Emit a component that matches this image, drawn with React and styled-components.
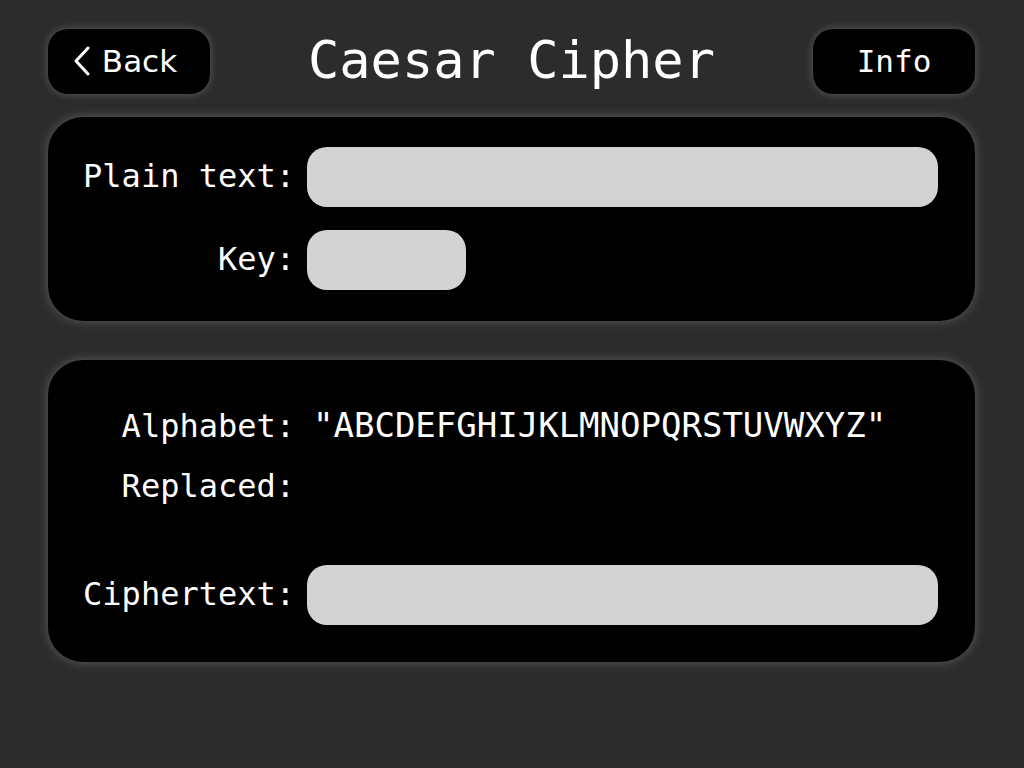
import React from 'react';
import styled, { createGlobalStyle } from 'styled-components';

const GlobalStyle = createGlobalStyle`
  html, body {
    margin: 0;
    padding: 0;
    background: #2c2c2c;
  }
  body {
    font-family: "DejaVu Sans Mono", monospace;
    color: #fff;
  }
`;

const Page = styled.div`
  width: 1024px;
  height: 768px;
  box-sizing: border-box;
  padding: 29px 49px 0 48px;
  display: flex;
  flex-direction: column;
`;

const Header = styled.div`
  display: flex;
  align-items: center;
  justify-content: space-between;
  height: 65px;
`;

const NavButton = styled.button`
  width: 162px;
  height: 65px;
  border: none;
  border-radius: 20px;
  background: #000;
  color: #fff;
  box-shadow: 0 0 9px rgba(170, 170, 170, 0.4);
  display: flex;
  align-items: center;
  justify-content: center;
  gap: 11px;
  font-family: ${p => (p.$sans ? '"DejaVu Sans", sans-serif' : '"DejaVu Sans Mono", monospace')};
  font-size: ${p => (p.$sans ? '31px' : '31px')};
  padding: 0 ${p => (p.$sans ? '8px' : '0')} 2px 0;
  cursor: pointer;
`;

const Title = styled.h1`
  margin: 0;
  font-family: "DejaVu Sans Mono", monospace;
  font-weight: normal;
  font-size: 52px;
  color: #fff;
  padding-bottom: 4px;
`;

const Panel = styled.div`
  background: #000;
  border-radius: 35px;
  box-shadow: 0 0 11px rgba(170, 170, 170, 0.4);
  padding: ${p => p.$pad};
  margin-top: ${p => p.$top};
  display: grid;
  grid-template-columns: 247px 1fr;
  column-gap: 12px;
  align-items: center;
`;

const Label = styled.div`
  text-align: right;
  font-size: 32px;
  height: 60px;
  line-height: 58px;
  margin-top: ${p => p.$mt || '0'};
`;

const Value = styled.div`
  font-size: 34px;
  height: 60px;
  line-height: 56px;
  margin-top: ${p => p.$mt || '0'};
  white-space: nowrap;
  margin-left: 6px;
`;

const Field = styled.div`
  height: 60px;
  width: ${p => p.$w || 'auto'};
  background: #d3d3d3;
  border-radius: 20px;
  margin-top: ${p => p.$mt || '0'};
`;

const Chevron = () => (
  <svg width="18" height="30" viewBox="0 0 18 30" fill="none">
    <path d="M15 2 L3 15 L15 28" stroke="#fff" strokeWidth="3" strokeLinecap="round" strokeLinejoin="round" />
  </svg>
);

export default function App() {
  return (
    <Page>
      <GlobalStyle />
      <Header>
        <NavButton $sans>
          <Chevron />
          Back
        </NavButton>
        <Title>Caesar Cipher</Title>
        <NavButton>Info</NavButton>
      </Header>

      <Panel $pad="30px 37px 31px 0" $top="23px">
        <Label>Plain text:</Label>
        <Field />
        <Label $mt="23px">Key:</Label>
        <Field $w="159px" $mt="23px" />
      </Panel>

      <Panel $pad="37px 37px 37px 0" $top="39px">
        <Label>Alphabet:</Label>
        <Value>"ABCDEFGHIJKLMNOPQRSTUVWXYZ"</Value>
        <Label>Replaced:</Label>
        <Value></Value>
        <Label $mt="48px">Ciphertext:</Label>
        <Field $mt="48px" />
      </Panel>
    </Page>
  );
}
